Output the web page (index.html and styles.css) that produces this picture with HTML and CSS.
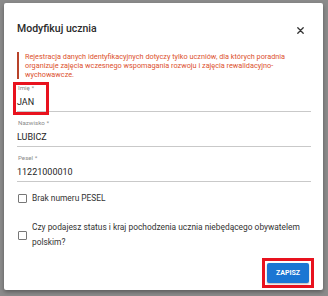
FILE: index.html
```html
<!DOCTYPE html>
<html lang="pl">

<head>
    <meta charset="UTF-8">
    <meta name="viewport" content="width=device-width, initial-scale=1.0">
    <title>Modyfikuj ucznia</title>
    <link rel="stylesheet" href="styles.css">
</head>

<body>
    <div class="Backdrop">
        <div class="Dialog">
            <div class="DialogHead">
                <h2 class="DialogTitle">Modyfikuj ucznia</h2>
                <button class="CloseBtn" aria-label="Zamknij">
                    <svg width="7" height="7" viewBox="0 0 7 7">
                        <path d="M0.8 0.8 L6.2 6.2 M6.2 0.8 L0.8 6.2" stroke="#333" stroke-width="1.3" stroke-linecap="round" />
                    </svg>
                </button>
            </div>
            <div class="Notice">
                Rejestracja danych identyfikacyjnych dotyczy tylko uczniów, dla których poradnia<br>
                organizuje zajęcia wczesnego wspomagania rozwoju i zajęcia rewalidacyjno-<br>
                wychowawcze.
            </div>
            <div class="Field Marked">
                <div class="FieldLabel">Imię *</div>
                <div class="FieldValue">JAN</div>
                <span class="Mark"></span>
            </div>
            <div class="Field">
                <div class="FieldLabel">Nazwisko *</div>
                <div class="FieldValue">LUBICZ</div>
            </div>
            <div class="Field">
                <div class="FieldLabel">Pesel *</div>
                <div class="FieldValue">11221000010</div>
            </div>
            <label class="Check First">
                <span class="Box"></span>
                <span class="CheckText">Brak numeru PESEL</span>
            </label>
            <label class="Check Second">
                <span class="Box"></span>
                <span class="CheckText">Czy podajesz status i kraj pochodzenia ucznia niebędącego obywatelem polskim?</span>
            </label>
            <div class="DialogFoot">
                <div class="SaveFrame">
                    <button class="SaveBtn">ZAPISZ</button>
                </div>
            </div>
        </div>
    </div>
</body>

</html>
```

FILE: styles.css
```css
* {
    box-sizing: border-box;
}

body {
    margin: 0;
    width: 328px;
    height: 296px;
    overflow: hidden;
    background-color: #8b8b8b;
    font-family: Roboto, "Liberation Sans", sans-serif;
}

.Backdrop {
    padding: 3px 5px 0 4px;
}

.Dialog {
    width: 319px;
    background-color: #fff;
    border-radius: 2px;
    padding: 0 10px 2px 13px;
    box-shadow: 0 2px 4px rgba(0, 0, 0, 0.35);
}

.DialogHead {
    display: flex;
    justify-content: space-between;
    align-items: center;
    padding-top: 19px;
    padding-right: 2px;
}

.DialogTitle {
    margin: 0;
    font-size: 10.5px;
    line-height: 14px;
    font-weight: 500;
    color: #2b2b2b;
}

.CloseBtn {
    border: none;
    background: none;
    padding: 0;
    width: 7px;
    height: 7px;
    margin-right: 7px;
    margin-top: 3px;
    display: flex;
}

.Notice {
    margin-top: 16px;
    margin-right: 2px;
    border-left: 2px solid #b8432a;
    padding-left: 6px;
    font-size: 7.3px;
    line-height: 9px;
    color: #dc512e;
}

.Field {
    position: relative;
    margin-top: 7px;
    margin-right: 2px;
    border-bottom: 1px solid #c9c9c9;
}

.Field.Marked {
    margin-top: 5px;
}

.FieldLabel {
    font-size: 6.2px;
    line-height: 8px;
    color: #8a8a8a;
    margin-left: 1px;
}

.FieldValue {
    margin-top: 4px;
    font-size: 9px;
    line-height: 12px;
    padding-bottom: 3px;
    color: #1e1e1e;
}

.Mark {
    position: absolute;
    left: -4px;
    top: -2px;
    width: 36px;
    height: 33px;
    border: 3px solid #e8121e;
}

.Check {
    display: flex;
    align-items: center;
    gap: 5px;
    margin-right: 2px;
    font-size: 8.4px;
    color: #333;
}

.Check.First {
    margin-top: 10px;
    line-height: 12px;
}

.Check.Second {
    margin-top: 16px;
    line-height: 15px;
}

.Box {
    flex-shrink: 0;
    width: 9px;
    height: 9px;
    border: 1px solid #777;
    border-radius: 1px;
    margin-left: 1px;
}

.DialogFoot {
    display: flex;
    justify-content: flex-end;
    margin-top: 8px;
    margin-right: -1px;
}

.SaveFrame {
    border: 3px solid #e8121e;
    padding: 2px;
    display: flex;
}

.SaveBtn {
    width: 42px;
    height: 20px;
    border: none;
    border-radius: 2px;
    background-color: #1b76d3;
    color: #fff;
    font-family: Roboto, "Liberation Sans", sans-serif;
    font-size: 7px;
    font-weight: 700;
    padding: 0;
    box-shadow: 0 1px 2px rgba(0, 0, 0, 0.3);
}
```
